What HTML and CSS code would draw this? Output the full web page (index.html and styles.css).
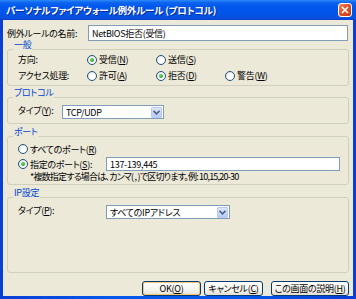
FILE: index.html
```html
<!DOCTYPE html>
<html lang="ja">
<head>
  <meta charset="UTF-8">
  <title>パーソナルファイアウォール例外ルール (プロトコル)</title>
  <link rel="stylesheet" href="styles.css">
</head>
<body>
  <div class="window">
    <!-- Title bar -->
    <div class="titlebar">
      <span class="title">パーソナルファイアウォール例外ルール (プロトコル)</span>
      <span class="close">
        <svg width="8" height="8" viewBox="0 0 8 8"><path d="M1 1L7 7M7 1L1 7" stroke="#fff" stroke-width="1.6"/></svg>
      </span>
    </div>

    <div class="client">
      <!-- Rule name -->
      <div class="name-row">
        <span class="name-label">例外ルールの名前:</span>
        <div class="textbox name-box">NetBIOS拒否(受信)</div>
      </div>

      <!-- General -->
      <div class="group group-general">
        <span class="legend">一般</span>
        <div class="radio-row">
          <span class="row-label">方向:</span>
          <span class="option col1"><span class="radio checked"></span>受信(<u>N</u>)</span>
          <span class="option col2"><span class="radio"></span>送信(<u>S</u>)</span>
        </div>
        <div class="radio-row">
          <span class="row-label">アクセス処理:</span>
          <span class="option col1"><span class="radio"></span>許可(<u>A</u>)</span>
          <span class="option col2"><span class="radio checked"></span>拒否(<u>D</u>)</span>
          <span class="option col3"><span class="radio"></span>警告(<u>W</u>)</span>
        </div>
      </div>

      <!-- Protocol -->
      <div class="group group-protocol">
        <span class="legend">プロトコル</span>
        <div class="select-row">
          <span class="select-label proto-label">タイプ(<u>Y</u>):</span>
          <div class="select proto-select">
            <span class="select-text">TCP/UDP</span>
            <span class="drop"><svg width="7" height="5" viewBox="0 0 7 5"><path d="M0.5 0.8L3.5 3.8L6.5 0.8" fill="none" stroke="#4d6185" stroke-width="1.6"/></svg></span>
          </div>
        </div>
      </div>

      <!-- Port -->
      <div class="group group-port">
        <span class="legend">ポート</span>
        <div class="port-row">
          <span class="option"><span class="radio"></span>すべてのポート(<u>R</u>)</span>
        </div>
        <div class="port-row">
          <span class="option port-spec"><span class="radio checked"></span>指定のポート(<u>S</u>):</span>
          <div class="textbox port-box">137-139,445</div>
        </div>
        <div class="note">*複数指定する場合は、カンマ( , )で区切ります。例: 10,15,20-30</div>
      </div>

      <!-- IP -->
      <div class="group group-ip">
        <span class="legend">IP設定</span>
        <div class="select-row">
          <span class="select-label ip-label">タイプ(<u>P</u>):</span>
          <div class="select ip-select">
            <span class="select-text">すべてのIPアドレス</span>
            <span class="drop"><svg width="7" height="5" viewBox="0 0 7 5"><path d="M0.5 0.8L3.5 3.8L6.5 0.8" fill="none" stroke="#4d6185" stroke-width="1.6"/></svg></span>
          </div>
        </div>
      </div>

      <!-- Buttons -->
      <div class="buttons">
        <button class="btn btn-ok">OK(<u>O</u>)</button>
        <button class="btn btn-cancel">キャンセル(<u>C</u>)</button>
        <button class="btn btn-help">この画面の説明(<u>H</u>)</button>
      </div>
    </div>
  </div>
</body>
</html>
```

FILE: styles.css
```css
* {
  box-sizing: border-box;
}
body {
  margin: 0;
  font-family: "Noto Sans CJK JP", "DejaVu Sans", sans-serif;
  font-size: 9px;
  font-feature-settings: "palt";
  letter-spacing: -0.3px;
  color: #000;
}
u {
  text-decoration: underline;
  text-underline-offset: 1px;
}
.window {
  width: 356px;
  height: 299px;
  display: flex;
  flex-direction: column;
  background: linear-gradient(to right, #0a3fd6, #0556ea 30%, #0556ea 70%, #0a3fd6);
}
.titlebar {
  height: 21px;
  display: flex;
  align-items: center;
  justify-content: space-between;
  padding: 0 4px 0 6px;
  background: linear-gradient(#2b8af8 0%, #0f66f0 12%, #0058ee 30%, #0055e8 70%, #0a50e0 90%, #0840cc 100%);
}
.title {
  color: #fff;
  font-weight: bold;
  font-size: 9.5px;
  letter-spacing: -0.2px;
  text-shadow: 1px 1px 0 #0a2a9a;
  white-space: nowrap;
}
.close {
  width: 14px;
  height: 14px;
  display: flex;
  align-items: center;
  justify-content: center;
  border: 1px solid #fff;
  border-radius: 3px;
  background: linear-gradient(135deg, #f08a66, #e0522a 45%, #c83c12);
}
.client {
  flex: 1;
  margin: 0 3px 3px;
  padding: 5px 4px 0;
  background: #ece9d8;
  display: flex;
  flex-direction: column;
}
.name-row {
  display: flex;
  align-items: center;
  height: 16px;
}
.name-label {
  width: 81px;
}
.textbox {
  background: #fff;
  border: 1px solid #7f9db9;
  display: flex;
  align-items: center;
  padding-left: 3px;
  white-space: nowrap;
}
.name-box {
  width: 260px;
  height: 16px;
}
.group {
  position: relative;
  border: 1px solid #d0d0bf;
  border-radius: 3px;
  padding-left: 10px;
}
.legend {
  position: absolute;
  top: -10px;
  left: 5px;
  padding: 0 1px;
  line-height: 10px;
  background: #ece9d8;
  color: #0046d5;
}
.group-general {
  margin-top: 8px;
  height: 37px;
  padding-top: 2px;
}
.radio-row {
  display: flex;
  align-items: center;
  height: 15px;
  margin-bottom: 1px;
}
.row-label {
  width: 69px;
}
.option {
  display: flex;
  align-items: center;
  white-space: nowrap;
}
.col1,
.col2 {
  width: 69px;
}
.radio {
  width: 10px;
  height: 10px;
  margin-right: 2px;
  border-radius: 50%;
  border: 1px solid #1c5180;
  background: radial-gradient(circle at 65% 65%, #fff 30%, #dcdcd6 100%);
  display: flex;
  align-items: center;
  justify-content: center;
  flex-shrink: 0;
}
.radio.checked::after {
  content: "";
  width: 4px;
  height: 4px;
  border-radius: 50%;
  background: radial-gradient(circle at 35% 35%, #6fe06f, #21a121 70%);
}
.group-protocol {
  margin-top: 11px;
  height: 27px;
  padding-top: 7px;
}
.select-row {
  display: flex;
  align-items: flex-start;
}
.select-label {
  line-height: 9px;
  padding-top: 1px;
}
.proto-label {
  width: 44px;
}
.ip-label {
  width: 88px;
}
.select {
  height: 14px;
  background: #fff;
  border: 1px solid #7f9db9;
  display: flex;
  align-items: center;
  justify-content: space-between;
  padding: 1px 1px 1px 3px;
}
.proto-select {
  width: 102px;
}
.ip-select {
  width: 124px;
}
.select-text {
  white-space: nowrap;
}
.drop {
  width: 11px;
  height: 11px;
  border: 1px solid #b9c9ef;
  border-radius: 1px;
  background: linear-gradient(#dce6fd, #b7cbf8);
  display: flex;
  align-items: center;
  justify-content: center;
}
.group-port {
  margin-top: 12px;
  height: 49px;
  padding-top: 5px;
}
.port-row {
  display: flex;
  align-items: center;
  height: 14px;
  margin-bottom: 1px;
}
.port-spec {
  width: 88px;
}
.port-box {
  width: 234px;
  height: 14px;
}
.note {
  padding-left: 12px;
  line-height: 9px;
  letter-spacing: -0.8px;
  white-space: nowrap;
}
.group-ip {
  margin-top: 12px;
  height: 76px;
  padding-top: 7px;
}
.buttons {
  display: flex;
  justify-content: flex-end;
  margin-top: 8px;
}
.btn {
  height: 15px;
  padding: 0;
  font-family: inherit;
  font-size: 9px;
  font-feature-settings: "palt";
  letter-spacing: -0.3px;
  color: #000;
  border: 1px solid #003c74;
  border-radius: 3px;
  background: linear-gradient(#fff, #f4f3ee 60%, #e3e0d3);
  white-space: nowrap;
}
.btn-ok {
  width: 59px;
  box-shadow: inset 0 0 0 1px #f5c77a;
}
.btn-cancel {
  width: 59px;
  margin-left: 3px;
}
.btn-help {
  width: 78px;
  margin-left: 8px;
}
```
